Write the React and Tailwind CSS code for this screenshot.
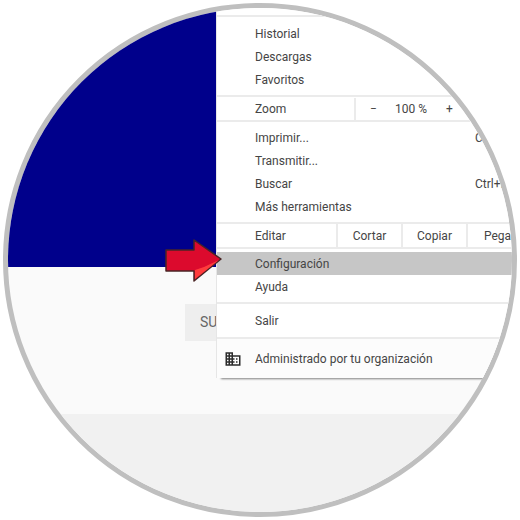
function Divider() {
  return <div className="h-[2px] bg-[#ebebeb]" />
}

function Row({ label, shortcut, active }) {
  return (
    <div className={`flex h-[23px] items-center pl-[38px] pt-px ${active ? 'bg-[#c6c6c6]' : ''}`}>
      <span className="w-[220px]">{label}</span>
      {shortcut && <span>{shortcut}</span>}
    </div>
  )
}

function Cell({ label }) {
  return (
    <div className="flex h-full w-[65px] items-center justify-center border-l-2 border-[#ebebeb] pt-px">
      {label}
    </div>
  )
}

function Menu() {
  return (
    <div className="absolute left-[208px] top-0 w-[320px] border-l border-[#e6e6e6] bg-white text-[12px] text-[#454545] shadow-[4px_2px_2px_-1px_#808080]">
      <div className="h-[7px]" />
      <Divider />
      <div className="pb-[4px] pt-[5px]">
        <Row label="Historial" />
        <Row label="Descargas" />
        <Row label="Favoritos" />
      </div>
      <Divider />
      <div className="flex h-[23px] items-center pt-px">
        <span className="w-[137px] pl-[38px]">Zoom</span>
        <div className="flex h-full items-center border-l-2 border-[#ebebeb]">
          <span className="w-[35px] text-center">−</span>
          <span className="w-[40px] text-center">100 %</span>
          <span className="w-[37px] text-center">+</span>
        </div>
      </div>
      <Divider />
      <div className="pb-[4px] pt-[4px]">
        <Row label="Imprimir..." shortcut="Ctrl+P" />
        <Row label="Transmitir..." />
        <Row label="Buscar" shortcut="Ctrl+F" />
        <Row label="Más herramientas" />
      </div>
      <Divider />
      <div className="flex h-[23px] items-center">
        <span className="w-[119px] pl-[38px] pt-px">Editar</span>
        <Cell label="Cortar" />
        <Cell label="Copiar" />
        <Cell label="Pegar" />
      </div>
      <Divider />
      <div className="pb-[4px] pt-[3px]">
        <Row label="Configuración" active />
        <Row label="Ayuda" />
      </div>
      <Divider />
      <div className="py-[5px]">
        <Row label="Salir" />
      </div>
      <Divider />
      <div className="flex h-[39px] items-center gap-[13px] bg-[#fcfcfc] pl-[7px]">
        <svg width="18" height="18" viewBox="0 0 24 24" fill="#2b2b2b">
          <path d="M12 7V3H2v18h20V7H12zM6 19H4v-2h2v2zm0-4H4v-2h2v2zm0-4H4V9h2v2zm0-4H4V5h2v2zm4 12H8v-2h2v2zm0-4H8v-2h2v2zm0-4H8V9h2v2zm0-4H8V5h2v2zm10 12h-8v-2h2v-2h-2v-2h2v-2h-2V9h8v10zm-2-8h-2v2h2v-2zm0 4h-2v2h2v-2z" />
        </svg>
        <span className="pt-px">Administrado por tu organización</span>
      </div>
    </div>
  )
}

function Arrow() {
  return (
    <svg className="absolute left-[150px] top-[230px]" width="68" height="48" viewBox="0 0 68 48">
      <polygon points="8,12 36,12 36,2 63,21 36,43 36,33 8,33" fill="#dc0a2d" stroke="#4a2424" strokeWidth="1.5" strokeLinejoin="round" />
      <polygon points="37,32 46,29 61,22 37,41" fill="#ff3c3c" />
    </svg>
  )
}

export default function App() {
  return (
    <div className="h-[520px] w-[520px] bg-white p-[3px] font-['Roboto',sans-serif]">
      <div className="relative flex h-[514px] w-[514px] flex-col overflow-hidden rounded-full border-[5px] border-[#bfbfbf] bg-[#fafafa]">
        <div className="h-[259px] w-[208px] shrink-0 bg-[#00008b]" />
        <div className="h-[147px] shrink-0 pl-[177px] pt-[37px]">
          <div className="flex h-[37px] w-[40px] items-center bg-[#eeeeee] pl-[15px] text-[14px] text-[#666666]">
            SU
          </div>
        </div>
        <div className="flex-1 bg-[#f1f1f1]" />
        <Menu />
        <Arrow />
      </div>
    </div>
  )
}
